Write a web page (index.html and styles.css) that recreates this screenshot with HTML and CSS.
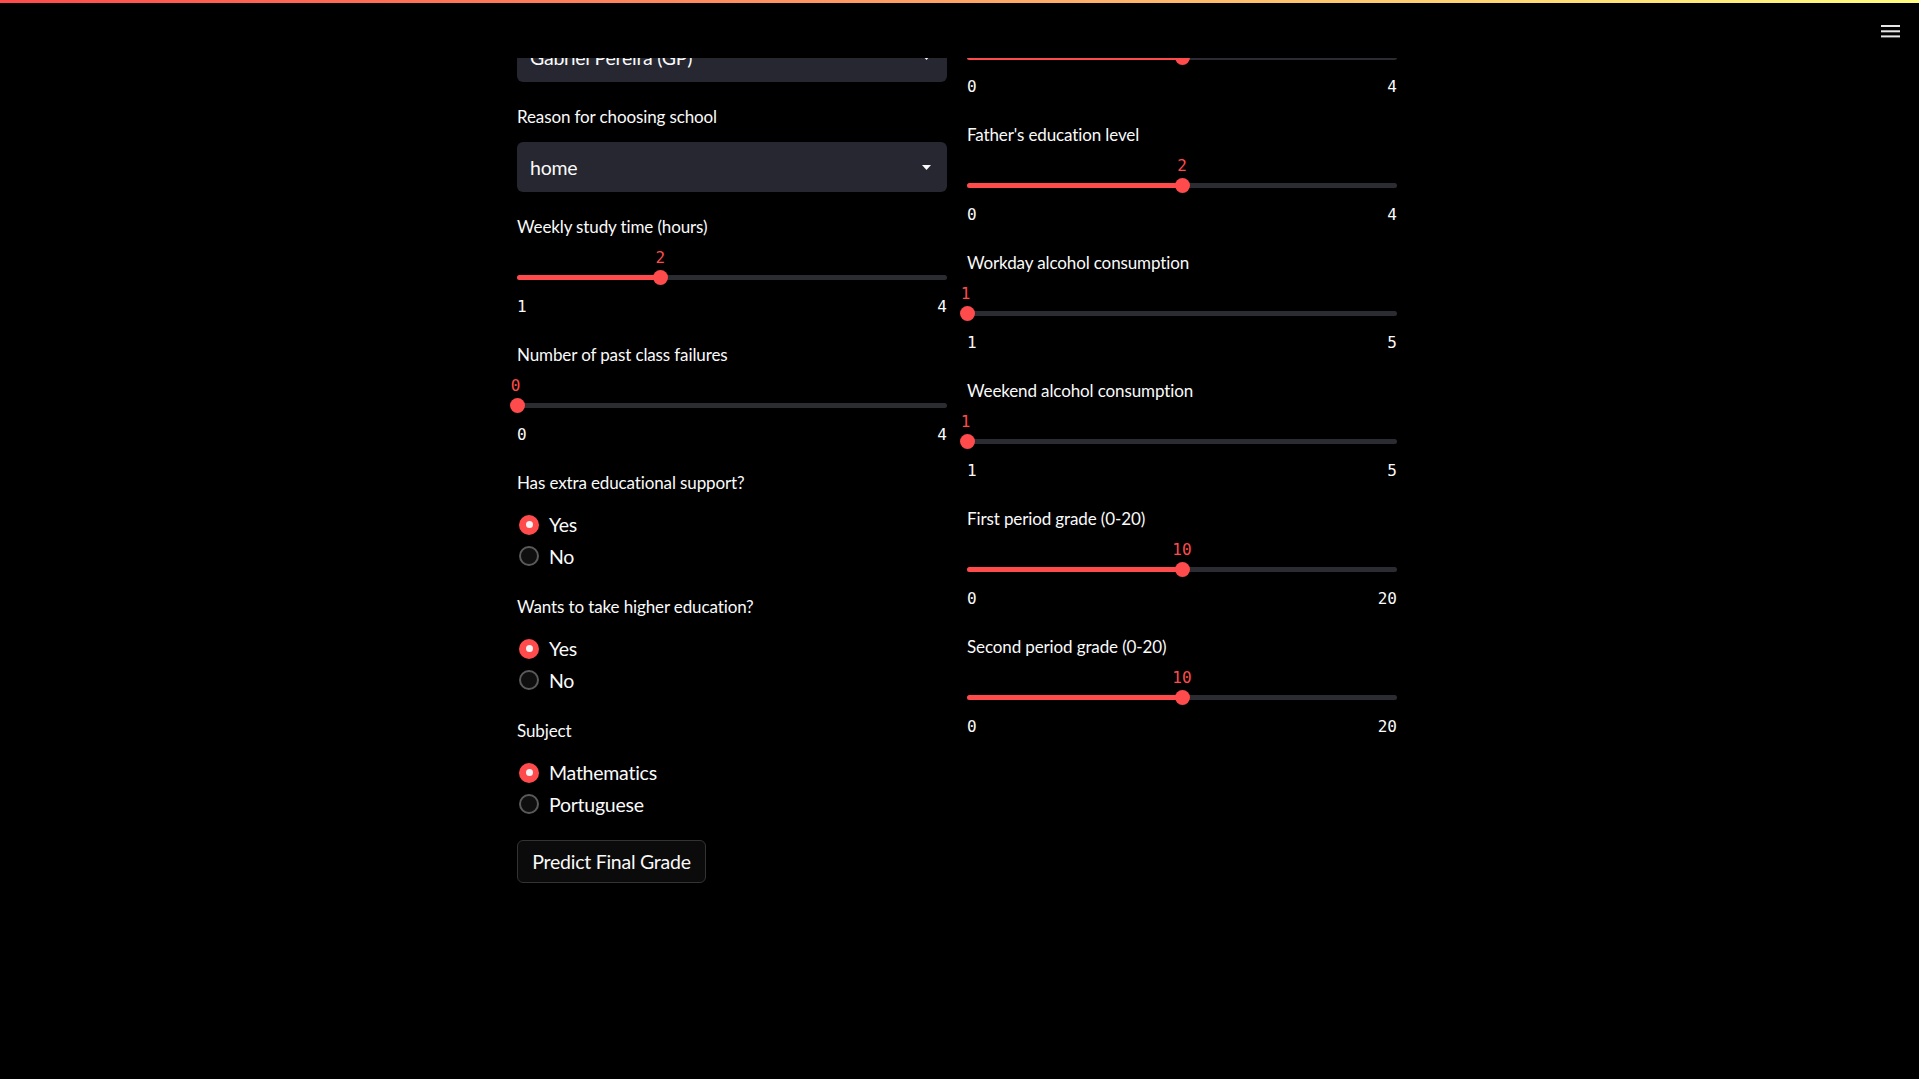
FILE: index.html
```html
<!DOCTYPE html>
<html lang="en">
<head>
<meta charset="utf-8">
<title>Student Grade Predictor</title>
<link rel="stylesheet" href="styles.css">
</head>
<body>
<header class="app-header">
  <div class="decoration"></div>
  <div class="header-bar">
    <button class="menu-btn" aria-label="Main menu">
      <svg width="19" height="13" viewBox="0 0 19 13"><rect x="0" y="0" width="19" height="2" fill="#e6e6e6"/><rect x="0" y="5.3" width="19" height="2" fill="#e6e6e6"/><rect x="0" y="10.4" width="19" height="2" fill="#e6e6e6"/></svg>
    </button>
  </div>
</header>

<main class="main">
  <div class="columns">
    <div class="col">
      <div class="widget select-widget">
        <div class="wlabel"></div>
        <div class="selectbox"><span class="select-value">Gabriel Pereira (GP)</span><svg class="caret" width="9" height="5" viewBox="0 0 9 5"><path d="M0 0H9L4.5 5Z" fill="#fafafa"/></svg></div>
      </div>
      <div class="widget select-widget">
        <div class="wlabel">Reason for choosing school</div>
        <div class="selectbox"><span class="select-value">home</span><svg class="caret" width="9" height="5" viewBox="0 0 9 5"><path d="M0 0H9L4.5 5Z" fill="#fafafa"/></svg></div>
      </div>
      <div class="widget slider-widget">
        <div class="wlabel">Weekly study time (hours)</div>
        <div class="slider-body">
          <div class="track"><div class="fill" style="width:33.333%"></div></div>
          <div class="thumb" style="left:33.333%"></div>
          <div class="value" style="left:33.333%">2</div>
        </div>
        <div class="ticks"><span>1</span><span>4</span></div>
      </div>
      <div class="widget slider-widget">
        <div class="wlabel">Number of past class failures</div>
        <div class="slider-body">
          <div class="track"><div class="fill" style="width:0%"></div></div>
          <div class="thumb" style="left:0%"></div>
          <div class="value value-start" style="left:0%">0</div>
        </div>
        <div class="ticks"><span>0</span><span>4</span></div>
      </div>
      <div class="widget radio-widget">
        <div class="wlabel">Has extra educational support?</div>
        <div class="options">
          <div class="option"><span class="dot checked"></span><span>Yes</span></div>
          <div class="option"><span class="dot"></span><span>No</span></div>
        </div>
      </div>
      <div class="widget radio-widget">
        <div class="wlabel">Wants to take higher education?</div>
        <div class="options">
          <div class="option"><span class="dot checked"></span><span>Yes</span></div>
          <div class="option"><span class="dot"></span><span>No</span></div>
        </div>
      </div>
      <div class="widget radio-widget">
        <div class="wlabel">Subject</div>
        <div class="options">
          <div class="option"><span class="dot checked"></span><span>Mathematics</span></div>
          <div class="option"><span class="dot"></span><span>Portuguese</span></div>
        </div>
      </div>
      <div class="widget">
        <button class="btn">Predict Final Grade</button>
      </div>
    </div>

    <div class="col">
      <div class="widget slider-widget">
        <div class="wlabel"></div>
        <div class="slider-body">
          <div class="track"><div class="fill" style="width:50%"></div></div>
          <div class="thumb" style="left:50%"></div>
        </div>
        <div class="ticks"><span>0</span><span>4</span></div>
      </div>
      <div class="widget slider-widget">
        <div class="wlabel">Father's education level</div>
        <div class="slider-body">
          <div class="track"><div class="fill" style="width:50%"></div></div>
          <div class="thumb" style="left:50%"></div>
          <div class="value" style="left:50%">2</div>
        </div>
        <div class="ticks"><span>0</span><span>4</span></div>
      </div>
      <div class="widget slider-widget">
        <div class="wlabel">Workday alcohol consumption</div>
        <div class="slider-body">
          <div class="track"><div class="fill" style="width:0%"></div></div>
          <div class="thumb" style="left:0%"></div>
          <div class="value value-start" style="left:0%">1</div>
        </div>
        <div class="ticks"><span>1</span><span>5</span></div>
      </div>
      <div class="widget slider-widget">
        <div class="wlabel">Weekend alcohol consumption</div>
        <div class="slider-body">
          <div class="track"><div class="fill" style="width:0%"></div></div>
          <div class="thumb" style="left:0%"></div>
          <div class="value value-start" style="left:0%">1</div>
        </div>
        <div class="ticks"><span>1</span><span>5</span></div>
      </div>
      <div class="widget slider-widget">
        <div class="wlabel">First period grade (0-20)</div>
        <div class="slider-body">
          <div class="track"><div class="fill" style="width:50%"></div></div>
          <div class="thumb" style="left:50%"></div>
          <div class="value" style="left:50%">10</div>
        </div>
        <div class="ticks"><span>0</span><span>20</span></div>
      </div>
      <div class="widget slider-widget">
        <div class="wlabel">Second period grade (0-20)</div>
        <div class="slider-body">
          <div class="track"><div class="fill" style="width:50%"></div></div>
          <div class="thumb" style="left:50%"></div>
          <div class="value" style="left:50%">10</div>
        </div>
        <div class="ticks"><span>0</span><span>20</span></div>
      </div>
    </div>
  </div>
</main>
</body>
</html>
```

FILE: styles.css
```css
html, body {
  margin: 0;
  padding: 0;
  background: #000;
  color: #fafafa;
  font-family: Lato, "Noto Sans", sans-serif;
}

.app-header {
  position: fixed;
  top: 0;
  left: 0;
  right: 0;
  height: 58px;
  background: #000;
  z-index: 10;
  display: flex;
  flex-direction: column;
}

.decoration {
  height: 3px;
  background: linear-gradient(90deg, rgb(255, 75, 75), rgb(255, 253, 128));
}

.header-bar {
  display: flex;
  justify-content: flex-end;
  padding: 22px 19px 0 0;
}

.menu-btn {
  background: none;
  border: 0;
  padding: 0;
  margin: 0;
  width: 19px;
  height: 13px;
  display: block;
}

.menu-btn svg { display: block; }

.main {
  width: 880px;
  margin: -8px 0 0 517px;
}

.columns {
  display: flex;
  gap: 20px;
  align-items: flex-start;
}

.col {
  width: 430px;
  display: flex;
  flex-direction: column;
  gap: 20px;
}

.wlabel {
  height: 30px;
  line-height: 30px;
  font-size: 17px;
  letter-spacing: -0.12px;
  color: #fafafa;
  white-space: nowrap;
}

.select-widget .wlabel { margin-bottom: 10px; }

.selectbox {
  height: 50px;
  box-sizing: border-box;
  background: #262730;
  border-radius: 6px;
  display: flex;
  align-items: center;
  justify-content: space-between;
  padding: 0 16px 0 13px;
  font-size: 19.5px;
  letter-spacing: -0.25px;
}

.caret { display: block; }

.slider-body {
  position: relative;
  height: 56.7px;
}

.track {
  position: absolute;
  left: 0;
  right: 0;
  top: 33.1px;
  height: 5px;
  border-radius: 3px;
  background: #2b2c31;
  overflow: hidden;
}

.fill {
  height: 100%;
  background: #ff4b4b;
}

.thumb {
  position: absolute;
  top: 28.1px;
  width: 15px;
  height: 15px;
  margin-left: -7.5px;
  border-radius: 50%;
  background: #ff4b4b;
}

.value {
  position: absolute;
  top: 7.2px;
  transform: translateX(-50%);
  font-family: "DejaVu Sans Mono", "Liberation Mono", monospace;
  font-size: 16px;
  line-height: 18px;
  color: #ff4b4b;
}

.value-start { margin-left: -1.5px; }

.ticks {
  height: 21.3px;
  display: flex;
  justify-content: space-between;
  font-family: "DejaVu Sans Mono", "Liberation Mono", monospace;
  font-size: 16px;
  line-height: 15px;
  color: #fafafa;
}

.options {
  padding-top: 11px;
}

.option {
  height: 31.5px;
  display: flex;
  align-items: center;
  gap: 10px;
  padding-left: 2px;
  font-size: 19.5px;
  letter-spacing: -0.25px;
}

.dot {
  width: 20px;
  height: 20px;
  box-sizing: border-box;
  border-radius: 50%;
  border: 2px solid #5a5a5a;
  background: #0f0f0f;
  flex: none;
  display: flex;
  align-items: center;
  justify-content: center;
}

.dot.checked {
  border: 0;
  background: #ff4b4b;
}

.dot.checked::after {
  content: "";
  width: 7px;
  height: 7px;
  border-radius: 50%;
  background: #f2f2f5;
}

.btn {
  width: 189px;
  height: 43px;
  box-sizing: border-box;
  background: #0b0b0b;
  border: 1px solid #333;
  border-radius: 6px;
  color: #fafafa;
  font-family: inherit;
  font-size: 19.5px;
  letter-spacing: -0.25px;
  padding: 0;
}
```
